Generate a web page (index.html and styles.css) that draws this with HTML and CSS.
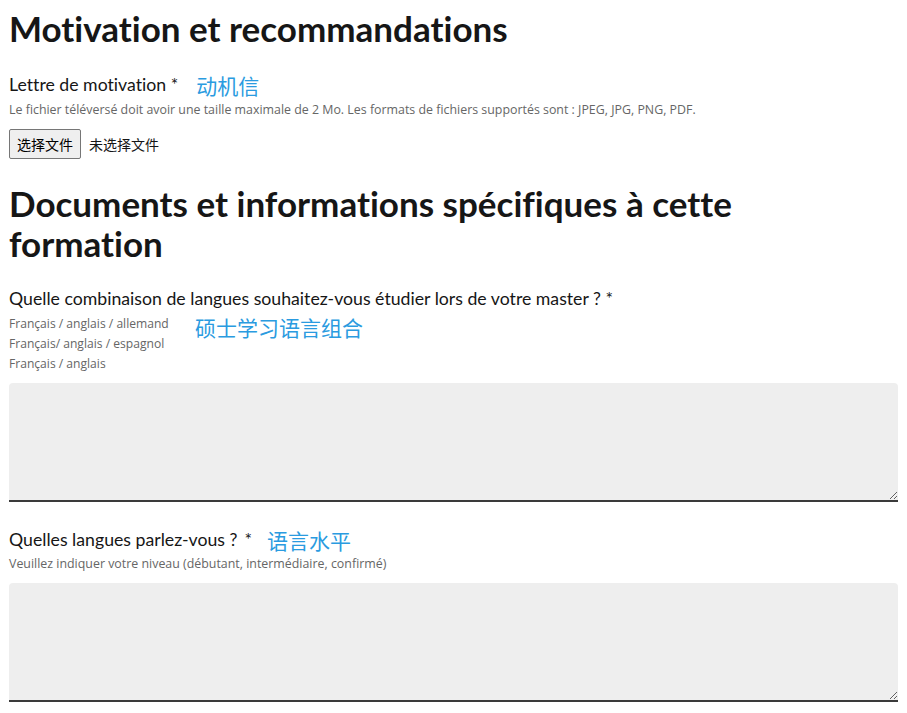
FILE: index.html
```html
<!DOCTYPE html>
<html lang="fr">
<head>
<meta charset="utf-8">
<title>Motivation et recommandations</title>
<link rel="stylesheet" href="styles.css">
</head>
<body>
<main class="page">
  <h2 class="title">Motivation et recommandations</h2>
  <div class="field field-letter">
    <div class="label-row">
      <span class="label">Lettre de motivation *</span>
      <span class="note note-1">动机信</span>
    </div>
    <p class="hint">Le fichier téléversé doit avoir une taille maximale de 2 Mo. Les formats de fichiers supportés sont : JPEG, JPG, PNG, PDF.</p>
    <div class="file-row">
      <button class="file-btn" type="button">选择文件</button>
      <span class="file-none">未选择文件</span>
    </div>
  </div>

  <h2 class="title title-2">Documents et informations spécifiques à cette formation</h2>

  <div class="field field-q1">
    <div class="label">Quelle combinaison de langues souhaitez-vous étudier lors de votre master ? *</div>
    <div class="hint-row">
      <div class="hint-list">
        <div>Français / anglais / allemand</div>
        <div>Français/ anglais / espagnol</div>
        <div>Français / anglais</div>
      </div>
      <span class="note note-2">硕士学习语言组合</span>
    </div>
    <textarea class="area"></textarea>
  </div>

  <div class="field field-q2">
    <div class="label-row">
      <span class="label">Quelles langues parlez-vous ?<span class="req">*</span></span>
      <span class="note note-3">语言水平</span>
    </div>
    <p class="hint">Veuillez indiquer votre niveau (débutant, intermédiaire, confirmé)</p>
    <textarea class="area"></textarea>
  </div>
</main>
</body>
</html>
```

FILE: styles.css
```css
* { box-sizing: border-box; }
html, body { margin: 0; padding: 0; background: #ffffff; }
body {
  font-family: "Noto Sans", "Noto Sans CJK SC", sans-serif;
  color: #161616;
}
.page {
  padding: 0 9px;
}
.title {
  margin: 0;
  font-family: "Lato", "Noto Sans CJK SC", sans-serif;
  font-weight: 700;
  font-size: 35px;
  line-height: 40px;
  padding-top: 8px;
  color: #161616;
  font-variant-ligatures: none;
}
.title-2 {
  padding-top: 0;
  margin-top: 24px;
  max-width: 780px;
}
.field-letter { margin-top: 24px; }
.label-row {
  display: flex;
  align-items: center;
  height: 26px;
}
.label {
  font-family: "Lato", "Noto Sans CJK SC", sans-serif;
  font-size: 17.7px;
  line-height: 26px;
  color: #161616;
  font-variant-ligatures: none;
}
.req { margin-left: 7px; }
.note {
  font-family: "Noto Sans CJK SC", sans-serif;
  font-size: 21px;
  color: #2a9be0;
  line-height: 26px;
}
.note-1 { margin-left: 18px; }
.note-3 { margin-left: 15px; }
.hint {
  margin: 2px 0 0;
  font-family: "Open Sans", sans-serif;
  font-size: 12.4px;
  line-height: 20px;
  color: #666666;
}
.file-row {
  display: flex;
  align-items: center;
  margin-top: 9px;
  height: 30px;
}
.file-btn {
  font-family: "Noto Sans CJK SC", sans-serif;
  font-size: 14px;
  height: 30px;
  padding: 0 7px;
  background: #efefef;
  border: 1px solid #767676;
  border-radius: 2px;
  color: #000;
}
.file-none {
  font-family: "Noto Sans CJK SC", sans-serif;
  font-size: 14px;
  margin-left: 8px;
  color: #161616;
}
.field-q1 { margin-top: 23px; }
.hint-row {
  display: flex;
  align-items: flex-start;
  margin-top: 2px;
}
.hint-list {
  font-family: "Open Sans", sans-serif;
  font-size: 12.1px;
  line-height: 20px;
  color: #666666;
  width: 186px;
}
.area {
  display: block;
  width: 100%;
  height: 119px;
  margin-top: 9px;
  background: #eeeeee;
  border: none;
  border-bottom: 2px solid #3a3a3a;
  border-radius: 4px 4px 0 0;
  resize: vertical;
}
.field-q2 { margin-top: 25px; }
.field-q2 .hint { margin-top: 1px; }
```
